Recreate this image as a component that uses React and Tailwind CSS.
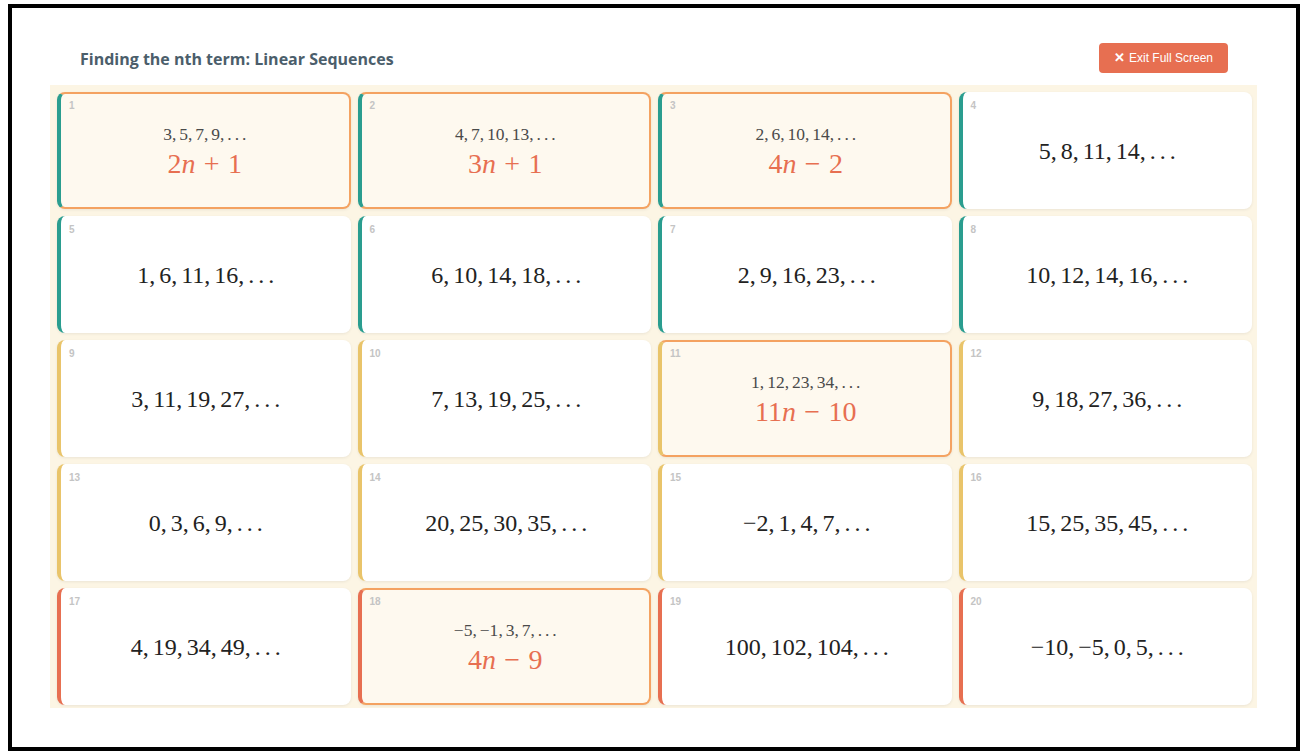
import React from "react";

const TEAL = "border-l-[#2a9d8f]";
const YEL = "border-l-[#e9c46a]";
const RED = "border-l-[#e76f51]";

const cards = [
  { n: 1, t: ["3", "5", "7", "9"], c: TEAL, f: ["2", "+", "1"] },
  { n: 2, t: ["4", "7", "10", "13"], c: TEAL, f: ["3", "+", "1"] },
  { n: 3, t: ["2", "6", "10", "14"], c: TEAL, f: ["4", "−", "2"] },
  { n: 4, t: ["5", "8", "11", "14"], c: TEAL },
  { n: 5, t: ["1", "6", "11", "16"], c: TEAL },
  { n: 6, t: ["6", "10", "14", "18"], c: TEAL },
  { n: 7, t: ["2", "9", "16", "23"], c: TEAL },
  { n: 8, t: ["10", "12", "14", "16"], c: TEAL },
  { n: 9, t: ["3", "11", "19", "27"], c: YEL },
  { n: 10, t: ["7", "13", "19", "25"], c: YEL },
  { n: 11, t: ["1", "12", "23", "34"], c: YEL, f: ["11", "−", "10"] },
  { n: 12, t: ["9", "18", "27", "36"], c: YEL },
  { n: 13, t: ["0", "3", "6", "9"], c: YEL },
  { n: 14, t: ["20", "25", "30", "35"], c: YEL },
  { n: 15, t: ["−2", "1", "4", "7"], c: YEL },
  { n: 16, t: ["15", "25", "35", "45"], c: YEL },
  { n: 17, t: ["4", "19", "34", "49"], c: RED },
  { n: 18, t: ["−5", "−1", "3", "7"], c: RED, f: ["4", "−", "9"] },
  { n: 19, t: ["100", "102", "104"], c: RED },
  { n: 20, t: ["−10", "−5", "0", "5"], c: RED },
];

function Seq({ terms }) {
  return (
    <span className="whitespace-nowrap">
      {terms.map((t, i) => (
        <span key={i}>
          {t}
          <span className="mr-[0.1667em]">,</span>
        </span>
      ))}
      <span>.</span>
      <span className="ml-[0.1667em]">.</span>
      <span className="ml-[0.1667em]">.</span>
    </span>
  );
}

function Formula({ f }) {
  return (
    <span className="whitespace-nowrap">
      {f[0]}
      <i>n</i>
      <span className="mx-[0.3em]">{f[1]}</span>
      {f[2]}
    </span>
  );
}

function Card({ card }) {
  const revealed = !!card.f;
  return (
    <div
      className={
        "relative flex flex-col items-center justify-center rounded-lg border-l-4 shadow-[0_1px_3px_rgba(0,0,0,0.07)] " +
        card.c +
        (revealed
          ? " bg-[#fef9ef] border-t-2 border-r-2 border-b-2 border-t-[#f4a261] border-r-[#f4a261] border-b-[#f4a261]"
          : " bg-white")
      }
    >
      <span
        className={
          "absolute left-[8px] text-[10px] font-bold leading-none text-[#c4c4c4] font-['Liberation_Sans',Arial,sans-serif] " +
          (revealed ? "top-[7px]" : "top-[9px]")
        }
      >
        {card.n}
      </span>
      {revealed ? (
        <div className="flex flex-col items-center font-['Liberation_Serif','Times_New_Roman',serif] pt-[2px]">
          <div className="text-[17.5px] leading-[20px] text-[#4a4a4a]">
            <Seq terms={card.t} />
          </div>
          <div className="text-[28px] leading-[32px] text-[#e76f51] mt-[4px]">
            <Formula f={card.f} />
          </div>
        </div>
      ) : (
        <div className="text-[24px] leading-none text-[#222222] font-['Liberation_Serif','Times_New_Roman',serif]">
          <Seq terms={card.t} />
        </div>
      )}
    </div>
  );
}

export default function App() {
  return (
    <div className="w-[1307px] h-[756px] bg-white pl-[8px] pt-[4px]">
      <div className="w-[1292px] h-[747px] border-4 border-black bg-white flex flex-col">
        <div className="mt-[35px] ml-[38px] w-[1207px] h-[30px] px-[30px] flex items-center justify-between">
          <h1 className="text-[16px] font-bold text-[#4b5e6b] font-['Open_Sans',sans-serif] pt-[2px]">
            Finding the nth term: Linear Sequences
          </h1>
          <button className="mr-[-1px] h-[30px] w-[129px] rounded-[4px] bg-[#e76f51] text-white text-[12px] font-['Liberation_Sans',Arial,sans-serif] flex items-center justify-center gap-[4px]">
            <span className="text-[13px] font-bold">✕</span>
            <span>Exit Full Screen</span>
          </button>
        </div>
        <div className="mt-[12px] ml-[38px] w-[1207px] h-[623px] bg-[#fcf5e4] pt-[7px] pl-[7px] pr-[5px] pb-[3px] grid grid-cols-4 grid-rows-[repeat(5,117px)] gap-[7px]">
          {cards.map((c) => (
            <Card key={c.n} card={c} />
          ))}
        </div>
      </div>
    </div>
  );
}
